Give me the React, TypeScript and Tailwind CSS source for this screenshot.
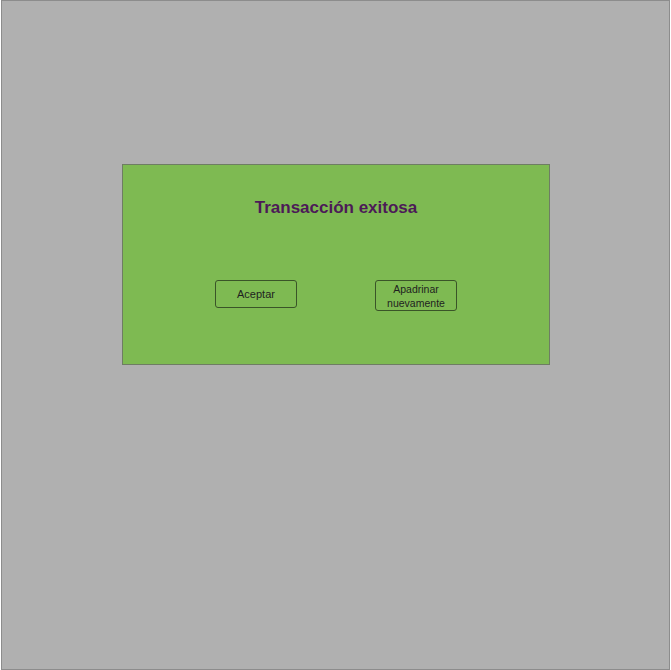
import React from "react";

export default function App() {
  return (
    <div className="w-[671px] h-[670px] bg-white pl-px" style={{ fontFamily: '"Liberation Sans", Arial, sans-serif' }}>
      <div className="w-[669px] h-[670px] border border-[#8c8c8c] bg-[#b0b0b0] pt-[163px] pl-[120px]">
        {/* success dialog */}
        <div className="w-[428px] h-[201px] border border-[#6e7d63] bg-[#7eba52] flex flex-col items-center pt-[33px]">
          <h2 className="text-[17px] leading-[20px] font-bold text-[#4c1a57]">Transacción exitosa</h2>
          <div className="flex items-start gap-[78px] mt-[62px]">
            <button className="w-[82px] h-[28px] rounded-[3px] border border-[#3a5428] text-[11px] text-[#1f1f1f] flex items-center justify-center pt-px">
              Aceptar
            </button>
            <button className="w-[82px] h-[31px] rounded-[3px] border border-[#3a5428] text-[10.5px] leading-[14px] text-[#1f1f1f] flex items-center justify-center">
              Apadrinar
              <br />
              nuevamente
            </button>
          </div>
        </div>
      </div>
    </div>
  );
}
